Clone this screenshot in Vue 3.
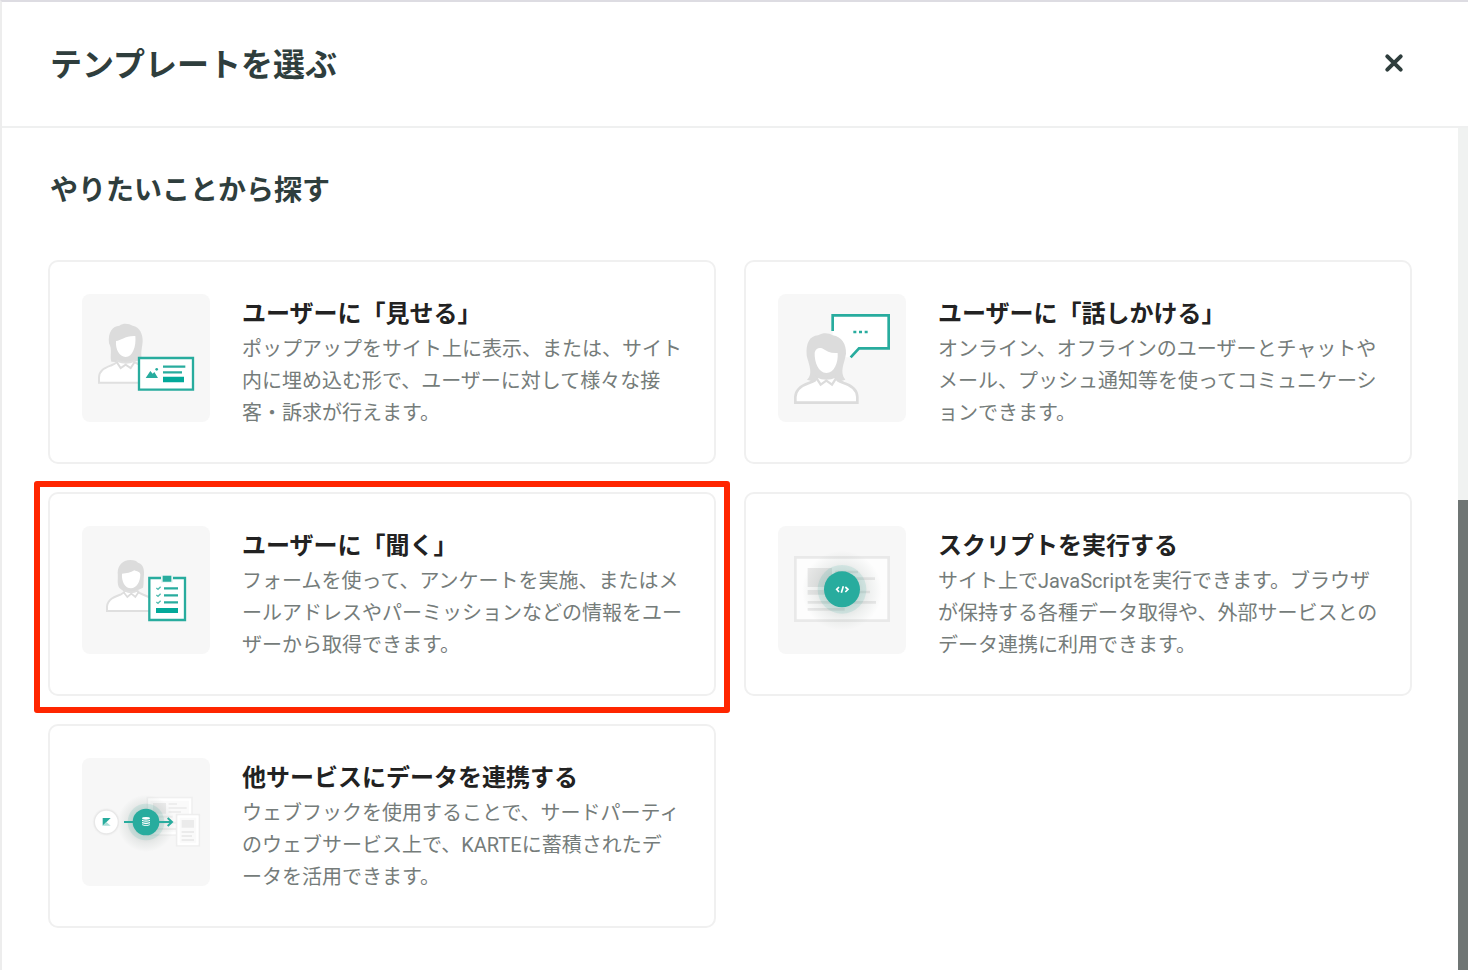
<script setup>
const cards = [
  {
    id: 'show',
    title: 'ユーザーに「見せる」',
    text: 'ポップアップをサイト上に表示、または、サイト内に埋め込む形で、ユーザーに対して様々な接客・訴求が行えます。',
  },
  {
    id: 'talk',
    title: 'ユーザーに「話しかける」',
    text: 'オンライン、オフラインのユーザーとチャットやメール、プッシュ通知等を使ってコミュニケーションできます。',
  },
  {
    id: 'ask',
    title: 'ユーザーに「聞く」',
    text: 'フォームを使って、アンケートを実施、またはメールアドレスやパーミッションなどの情報をユーザーから取得できます。',
    marked: true,
  },
  {
    id: 'script',
    title: 'スクリプトを実行する',
    text: 'サイト上でJavaScriptを実行できます。ブラウザが保持する各種データ取得や、外部サービスとのデータ連携に利用できます。',
  },
  {
    id: 'connect',
    title: '他サービスにデータを連携する',
    text: 'ウェブフックを使用することで、サードパーティのウェブサービス上で、KARTEに蓄積されたデ\nータを活用できます。',
  },
]
</script>

<template>
  <main class="panel" lang="ja">
    <header class="header">
      <h1 class="title">テンプレートを選ぶ</h1>
      <button class="close" type="button" aria-label="閉じる">
        <svg viewBox="0 0 20 20" fill="none" stroke="#2f3e3d" stroke-width="4" stroke-linecap="round">
          <path d="M3.3 3.3 16.7 16.7M16.7 3.3 3.3 16.7" />
        </svg>
      </button>
    </header>

    <div class="body">
      <section class="content">
        <h2 class="subtitle">やりたいことから探す</h2>
        <div class="grid">
          <button v-for="card in cards" :key="card.id" type="button" class="card" :class="{ marked: card.marked }">
            <svg v-if="card.id === 'show'" class="thumb" viewBox="18 18 384 384" fill="none" aria-hidden="true">
              <path d="M106 221C101 203 110 186 99 166C95 132 110 114 130 113C144 103 160 108 170 113C192 117 201 140 200 160C199 180 193 191 198 216L178 220L150 232L120 222Z" fill="#dcdcdc" />
              <path d="M69 284V268C70 245 88 240 108 231C120 226 124 222 125 219C142 226 158 226 174 219C180 231 200 230 218 242C230 252 232 270 232 284Z" fill="#fff" stroke="#e0e0e0" stroke-width="6" />
              <path d="M122 222 134 240 149 230 164 240 176 222" stroke="#dcdcdc" stroke-width="6" />
              <path d="M120 159C136 158 145 143 178 144C181 175 170 207 149 207C130 206 118 184 120 159Z" fill="#fff" />
              <path d="M189 210H351V305H189Z" fill="#fff" stroke="#28ac9e" stroke-width="7" />
              <path d="M209 270 223 249 230 257 235 252 246 270Z" fill="#28ac9e" />
              <circle cx="242" cy="244" r="4" fill="#28ac9e" />
              <path d="M261 236H328M261 253H318" stroke="#28ac9e" stroke-width="7" />
              <path d="M261 266H324V283H261Z" fill="#03a99a" />
            </svg>

            <svg v-else-if="card.id === 'talk'" class="thumb" viewBox="18 18 384 384" fill="none" aria-hidden="true">
              <path d="M182 81H350V182H262L236 208H182Z" fill="#fff" />
              <path d="M105 275C126 258 108 224 104 202C101 165 113 144 138 142C154 132 172 135 182 142C210 147 223 168 222 197C218 226 201 250 220 275L190 284H136Z" fill="#dcdcdc" />
              <path d="M70 344V327C71 302 93 291 111 285C126 280 135 276 135 265C152 273 174 273 191 265C191 276 201 280 215 285C235 291 255 302 256 327V344Z" fill="#fff" stroke="#dcdcdc" stroke-width="8" />
              <path d="M132 268 146 290 163 278 180 290 194 268" stroke="#dcdcdc" stroke-width="7" />
              <path d="M128 194C130 183 140 177 150 181C164 190 177 197 197 195C199 224 187 255 163 255C139 254 127 222 128 194Z" fill="#fff" />
              <path d="M182 129V82H350V181H261L236 208" stroke="#28ac9e" stroke-width="8" />
              <path d="M244 128H253V136H244ZM261 128H270V136H261ZM278 128H287V136H278Z" fill="#28ac9e" />
            </svg>

            <svg v-else-if="card.id === 'ask'" class="thumb" viewBox="18 18 384 384" fill="none" aria-hidden="true">
              <path d="M130 204C122 190 127 175 125 158C125 138 139 120 163 120C176 120 183 124 186 128C202 132 205 149 204 164C202 180 204 192 201 203L186 210 166 224 143 214Z" fill="#dcdcdc" />
              <path d="M93 273V259C96 236 119 229 135 223C143 219 146 217 147 212C160 219 171 219 184 212C187 221 199 222 218 231C235 239 240 252 240 273Z" fill="#fff" stroke="#dfdfdf" stroke-width="6" />
              <path d="M143 217 154 231 166 221 178 231 188 216" stroke="#dcdcdc" stroke-width="5" />
              <path d="M138 161C153 160 163 158 175 151C183 156 191 153 193 163C193 185 182 205 165 205C147 205 136 184 138 161Z" fill="#fff" />
              <path d="M220 174H327V300H220Z" fill="#fff" stroke="#28ac9e" stroke-width="7" />
              <path d="M255 165H291V188H255Z" fill="#e8f6f4" />
              <path d="M260 167H286V185H260Z" fill="#28ac9e" />
              <path d="M264 205H306M264 226H306M264 247H306" stroke="#28ac9e" stroke-width="7" />
              <path d="M241 204 246 208 254 200M241 225 246 229 254 221M241 246 246 250 254 242" stroke="#55bdb2" stroke-width="4" />
              <path d="M240 264H306V279H240Z" fill="#03a99a" />
            </svg>

            <svg v-else-if="card.id === 'script'" class="thumb" viewBox="18 18 384 384" fill="none" aria-hidden="true">
              <defs>
                <radialGradient id="script-glow">
                  <stop offset="0.45" stop-color="#64776f" stop-opacity="0.2" />
                  <stop offset="0.7" stop-color="#64776f" stop-opacity="0.09" />
                  <stop offset="1" stop-color="#64776f" stop-opacity="0" />
                </radialGradient>
              </defs>
              <path d="M70 112H350V302H70Z" fill="#fdfdfd" stroke="#e9e9e9" stroke-width="8" />
              <path d="M107 144H180V201H107ZM107 210H180V224H107Z" fill="#e8e8e8" />
              <path d="M190 156H258M190 176H309M190 216H294M107 247H312M107 268H218" stroke="#e9e9e9" stroke-width="8" />
              <circle cx="210" cy="212" r="120" fill="url(#script-glow)" />
              <circle cx="210" cy="208" r="73" fill="#28ac9e" fill-opacity="0.13" />
              <circle cx="210" cy="208" r="54" fill="#28ac9e" />
              <path d="M201 201 194 208 201 216M220 201 228 208 220 216M214 199 208 218" stroke="#fff" stroke-width="5" />
            </svg>

            <svg v-else class="thumb" viewBox="18 18 384 384" fill="none" aria-hidden="true">
              <defs>
                <radialGradient id="connect-glow">
                  <stop offset="0.45" stop-color="#64776f" stop-opacity="0.22" />
                  <stop offset="0.7" stop-color="#64776f" stop-opacity="0.1" />
                  <stop offset="1" stop-color="#64776f" stop-opacity="0" />
                </radialGradient>
              </defs>
              <path d="M214 137H348V249H214Z" fill="#fafafa" stroke="#f0f0f0" stroke-width="5" />
              <path d="M220 143H342V243H220Z" stroke="#fff" stroke-width="7" />
              <path d="M231 153H270V185H231Z" fill="#ebebeb" />
              <path d="M278 156H303M278 168H332M278 180H315M231 194H290M231 212H300M231 231H300" stroke="#eeeeee" stroke-width="6" />
              <path d="M302 188H370V281H302Z" fill="#fafafa" stroke="#eeeeee" stroke-width="5" />
              <path d="M308 194H364V276H308Z" stroke="#fff" stroke-width="7" />
              <path d="M317 204H354V227H317Z" fill="#ebebeb" />
              <path d="M317 240H354M317 252H348M317 264H354" stroke="#ebebeb" stroke-width="6" />
              <circle cx="210" cy="214" r="86" fill="url(#connect-glow)" />
              <circle cx="210" cy="210" r="55" fill="#28ac9e" fill-opacity="0.13" />
              <path d="M144 210H288M275 198 288 210 275 222" stroke="#28ac9e" stroke-width="6" />
              <circle cx="210" cy="210" r="40" fill="#28ac9e" />
              <ellipse cx="210" cy="199" rx="12" ry="4" fill="#fff" />
              <path d="M198 203Q210 208 222 203V207Q210 212 198 207ZM198 210Q210 215 222 210V214Q210 219 198 214ZM198 217Q210 222 222 217V219Q210 225 198 219Z" fill="#fff" />
              <circle cx="91" cy="210" r="41" fill="#f2f2f2" />
              <circle cx="91" cy="210" r="36" fill="#fff" stroke="#e8e8e8" stroke-width="4" />
              <path d="M80 198H104L80 221Z" fill="#28ac9e" />
              <path d="M91 210 104 221H80Z" fill="#a9ddd7" />
            </svg>

            <span class="card-text">
              <span class="card-title">{{ card.title }}</span>
              <span class="card-desc">{{ card.text }}</span>
            </span>
          </button>
        </div>
      </section>

      <div class="track" aria-hidden="true">
        <div class="handle"></div>
      </div>
    </div>
  </main>
</template>

<style>
body {
  background: #fff;
}
</style>

<style scoped>
.panel {
  box-sizing: border-box;
  min-height: 100vh;
  display: flex;
  flex-direction: column;
  border-top: 2px solid #dddce2;
  border-left: 2px solid #ededed;
  background: #fff;
  color: #2f3e3d;
  font-family: Roboto, "Noto Sans CJK JP", sans-serif;
}

.header {
  display: flex;
  align-items: center;
  justify-content: space-between;
  padding: 39px 64px 37px 48px;
  border-bottom: 2px solid #eff0f0;
}

.title {
  margin: 0;
  font-size: 32px;
  line-height: 48px;
  font-weight: 700;
}

.close {
  display: flex;
  margin-bottom: 4px;
  padding: 0;
  border: 0;
  background: none;
  cursor: pointer;
}

.close svg {
  width: 20px;
  height: 20px;
}

.body {
  flex: 1;
  display: flex;
}

.content {
  flex: 1;
  padding: 42px 46px;
}

.subtitle {
  margin: 0 0 48px 2px;
  font-size: 28px;
  line-height: 42px;
  font-weight: 700;
}

.grid {
  display: grid;
  grid-template-columns: 1fr 1fr;
  gap: 28px;
}

.card {
  position: relative;
  display: flex;
  align-items: flex-start;
  gap: 32px;
  padding: 32px;
  border: 2px solid #f0f0f0;
  border-radius: 10px;
  background: #fff;
  font-family: inherit;
  text-align: left;
  cursor: pointer;
}

.marked::after {
  content: "";
  position: absolute;
  inset: -13px -16px -19px;
  border: 6px solid #ff2600;
  border-radius: 3px;
}

.thumb {
  flex: none;
  width: 128px;
  height: 128px;
  border-radius: 8px;
  background: #f7f7f7;
}

.card-text {
  flex: 1;
}

.card-title {
  display: block;
  color: #222;
  font-size: 24px;
  line-height: 40px;
  font-weight: 700;
}

.card-desc {
  display: block;
  margin-top: -1px;
  padding-bottom: 1px;
  color: #757c7a;
  font-size: 20px;
  line-height: 32px;
  white-space: pre-line;
}

.track {
  width: 10px;
  display: flex;
  flex-direction: column;
  justify-content: flex-end;
  background: #f0f2f1;
}

.handle {
  height: 55.8%;
  background: #6f7574;
}
</style>
